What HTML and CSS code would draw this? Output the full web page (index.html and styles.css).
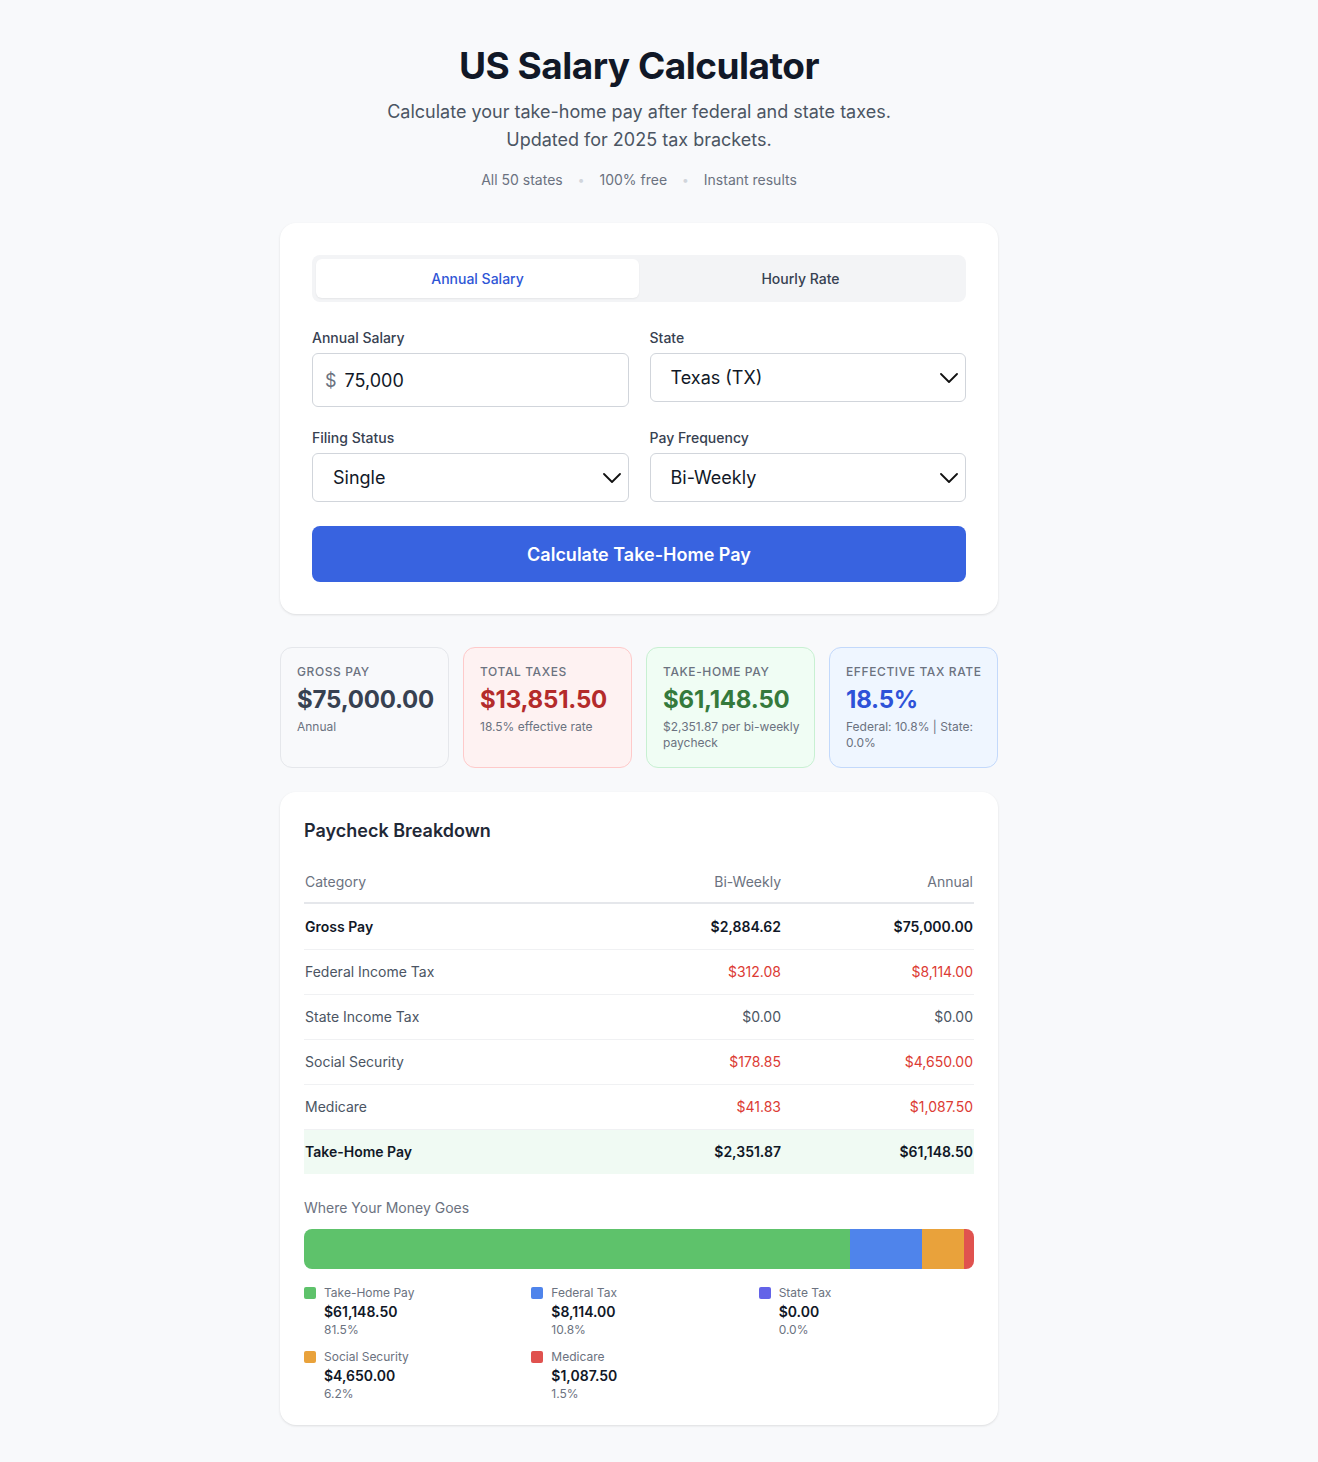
FILE: index.html
```html
<!DOCTYPE html>
<html lang="en">
<head>
<meta charset="utf-8">
<title>US Salary Calculator</title>
<link rel="stylesheet" href="styles.css">
</head>
<body>
<main class="page">
  <header class="hero">
    <h1 class="title">US Salary Calculator</h1>
    <p class="subtitle">Calculate your take-home pay after federal and state taxes.<br>Updated for 2025 tax brackets.</p>
    <div class="meta">
      <span>All 50 states</span><span class="dot">•</span><span>100% free</span><span class="dot">•</span><span>Instant results</span>
    </div>
  </header>

  <section class="card form-card">
    <div class="tabs">
      <div class="tab active">Annual Salary</div>
      <div class="tab">Hourly Rate</div>
    </div>
    <div class="fields">
      <div class="field">
        <label class="label">Annual Salary</label>
        <div class="input money"><span class="cur">$</span><span class="val">75,000</span></div>
      </div>
      <div class="field">
        <label class="label">State</label>
        <div class="input select"><span class="val">Texas (TX)</span>
          <svg class="chev" viewBox="0 0 18 10" width="18" height="10"><path d="M1 1l8 8 8-8" fill="none" stroke="#111" stroke-width="1.8" stroke-linecap="round" stroke-linejoin="round"/></svg></div>
      </div>
      <div class="field">
        <label class="label">Filing Status</label>
        <div class="input select"><span class="val">Single</span>
          <svg class="chev" viewBox="0 0 18 10" width="18" height="10"><path d="M1 1l8 8 8-8" fill="none" stroke="#111" stroke-width="1.8" stroke-linecap="round" stroke-linejoin="round"/></svg></div>
      </div>
      <div class="field">
        <label class="label">Pay Frequency</label>
        <div class="input select"><span class="val">Bi-Weekly</span>
          <svg class="chev" viewBox="0 0 18 10" width="18" height="10"><path d="M1 1l8 8 8-8" fill="none" stroke="#111" stroke-width="1.8" stroke-linecap="round" stroke-linejoin="round"/></svg></div>
      </div>
    </div>
    <button class="btn">Calculate Take-Home Pay</button>
  </section>

  <section class="stats">
    <div class="stat gross">
      <div class="stat-label">Gross Pay</div>
      <div class="stat-value">$75,000.00</div>
      <div class="stat-sub">Annual</div>
    </div>
    <div class="stat taxes">
      <div class="stat-label">Total Taxes</div>
      <div class="stat-value">$13,851.50</div>
      <div class="stat-sub">18.5% effective rate</div>
    </div>
    <div class="stat home">
      <div class="stat-label">Take-Home Pay</div>
      <div class="stat-value">$61,148.50</div>
      <div class="stat-sub">$2,351.87 per bi-weekly paycheck</div>
    </div>
    <div class="stat rate">
      <div class="stat-label">Effective Tax Rate</div>
      <div class="stat-value">18.5%</div>
      <div class="stat-sub">Federal: 10.8% | State: 0.0%</div>
    </div>
  </section>

  <section class="card breakdown">
    <h2 class="section-title">Paycheck Breakdown</h2>
    <table class="table">
      <thead>
        <tr><th class="c-cat">Category</th><th class="num">Bi-Weekly</th><th class="num">Annual</th></tr>
      </thead>
      <tbody>
        <tr class="strong"><td>Gross Pay</td><td class="num">$2,884.62</td><td class="num">$75,000.00</td></tr>
        <tr><td>Federal Income Tax</td><td class="num neg">$312.08</td><td class="num neg">$8,114.00</td></tr>
        <tr><td>State Income Tax</td><td class="num">$0.00</td><td class="num">$0.00</td></tr>
        <tr><td>Social Security</td><td class="num neg">$178.85</td><td class="num neg">$4,650.00</td></tr>
        <tr><td>Medicare</td><td class="num neg">$41.83</td><td class="num neg">$1,087.50</td></tr>
        <tr class="strong total"><td>Take-Home Pay</td><td class="num">$2,351.87</td><td class="num">$61,148.50</td></tr>
      </tbody>
    </table>

    <div class="where">Where Your Money Goes</div>
    <div class="bar">
      <div class="seg s-home" style="width:81.5%"></div>
      <div class="seg s-fed" style="width:10.8%"></div>
      <div class="seg s-ss" style="width:6.2%"></div>
      <div class="seg s-med" style="width:1.5%"></div>
    </div>

    <div class="legend">
      <div class="item"><span class="sw s-home"></span><div><div class="l-name">Take-Home Pay</div><div class="l-val">$61,148.50</div><div class="l-pct">81.5%</div></div></div>
      <div class="item"><span class="sw s-fed"></span><div><div class="l-name">Federal Tax</div><div class="l-val">$8,114.00</div><div class="l-pct">10.8%</div></div></div>
      <div class="item"><span class="sw s-state"></span><div><div class="l-name">State Tax</div><div class="l-val">$0.00</div><div class="l-pct">0.0%</div></div></div>
      <div class="item"><span class="sw s-ss"></span><div><div class="l-name">Social Security</div><div class="l-val">$4,650.00</div><div class="l-pct">6.2%</div></div></div>
      <div class="item"><span class="sw s-med"></span><div><div class="l-name">Medicare</div><div class="l-val">$1,087.50</div><div class="l-pct">1.5%</div></div></div>
    </div>
  </section>
</main>
</body>
</html>
```

FILE: styles.css
```css
* { box-sizing: border-box; }

html, body {
  margin: 0;
  background: #f8f9fb;
}

body {
  font-family: Inter, "Noto Sans", "Liberation Sans", sans-serif;
  color: #111827;
  padding: 0 40px 36px 0;
}

.page {
  width: 718px;
  margin: 0 auto;
}

.hero {
  text-align: center;
  padding-top: 44px;
}

.title {
  margin: 0;
  font-size: 37px;
  line-height: 44px;
  font-weight: 700;
  letter-spacing: -0.5px;
  color: #111827;
}

.subtitle {
  margin: 10px 0 0;
  font-size: 18px;
  line-height: 28px;
  color: #4b5563;
}

.meta {
  margin-top: 16px;
  font-size: 14px;
  line-height: 20px;
  color: #6b7280;
  display: flex;
  justify-content: center;
  gap: 15px;
}

.meta .dot {
  color: #d1d5db;
  font-size: 12px;
}

.card {
  background: #fff;
  border-radius: 16px;
  box-shadow: 0 1px 3px rgba(0,0,0,0.08), 0 1px 2px rgba(0,0,0,0.04);
}

.form-card {
  margin-top: 33px;
  padding: 32px;
}

.tabs {
  display: grid;
  grid-template-columns: 1fr 1fr;
  background: #f3f4f6;
  border-radius: 8px;
  padding: 4px;
}

.tab {
  text-align: center;
  font-size: 14px;
  line-height: 39px;
  font-weight: 500;
  color: #374151;
  border-radius: 6px;
}

.tab.active {
  background: #fff;
  color: #2f56d6;
  box-shadow: 0 1px 2px rgba(0,0,0,0.06);
}

.fields {
  display: grid;
  grid-template-columns: 1fr 1fr;
  column-gap: 21px;
  row-gap: 21px;
  margin-top: 26px;
  align-items: start;
}

.label {
  display: block;
  font-size: 14px;
  line-height: 20px;
  font-weight: 500;
  color: #374151;
  margin-bottom: 5px;
}

.input {
  border: 1px solid #d1d5db;
  border-radius: 6px;
  background: #fff;
  display: flex;
  align-items: center;
  font-size: 18px;
  color: #111827;
}

.money {
  height: 54px;
  padding: 0 12px;
  gap: 8px;
}

.money .cur {
  color: #6b7280;
}

.select {
  height: 49px;
  padding: 0 7px 0 20px;
  justify-content: space-between;
}

.btn {
  display: block;
  width: 100%;
  margin-top: 24px;
  height: 56px;
  border: 0;
  border-radius: 8px;
  background: #3863e0;
  color: #fff;
  font-family: inherit;
  font-size: 18px;
  font-weight: 600;
}

.stats {
  display: grid;
  grid-template-columns: repeat(4, minmax(0, 1fr));
  gap: 14px;
  margin-top: 33px;
}

.stat {
  border: 1px solid #e5e7eb;
  border-radius: 12px;
  padding: 16px 12px 16px 16px;
  min-height: 120px;
}

.stat-label {
  font-size: 12px;
  line-height: 16px;
  letter-spacing: 0.05em;
  text-transform: uppercase;
  color: #6b7280;
  font-weight: 500;
  white-space: nowrap;
}

.stat-value {
  font-size: 24px;
  line-height: 30px;
  font-weight: 700;
  margin-top: 5px;
  letter-spacing: -0.2px;
}

.stat-sub {
  font-size: 12px;
  line-height: 16px;
  color: #6b7280;
  margin-top: 4px;
}

.gross { background: #f8f9fb; border-color: #e5e7eb; }
.gross .stat-value { color: #374151; }
.taxes { background: #fef2f2; border-color: #fecaca; }
.taxes .stat-value { color: #b42b2b; }
.home { background: #f0fdf4; border-color: #c8f0d2; }
.home .stat-value { color: #357a3c; }
.rate { background: #eff6ff; border-color: #c3d9fb; }
.rate .stat-value { color: #2e52d8; }

.breakdown {
  margin-top: 24px;
  padding: 25px 24px 23px;
}

.section-title {
  margin: 0;
  font-size: 18px;
  line-height: 28px;
  font-weight: 600;
  color: #1f2937;
}

.table {
  width: 100%;
  border-collapse: collapse;
  margin-top: 14px;
  font-size: 14px;
}

.table th {
  font-weight: 400;
  color: #6b7280;
  text-align: left;
  padding: 0 1px 12px;
  height: 44px;
  vertical-align: bottom;
  border-bottom: 2px solid #e5e7eb;
}

.table td {
  padding: 0 1px;
  height: 45px;
  color: #4b5563;
  border-bottom: 1px solid #f0f1f3;
}

.table tbody tr:first-child td {
  height: 46px;
  padding-top: 1px;
}

.table .num {
  text-align: right;
}

.table th.num:nth-child(2) { width: 160px; }
.table th.num:nth-child(3) { width: 192px; }

.table td.neg { color: #dc3b34; }

.table tr.strong td {
  font-weight: 600;
  color: #111827;
}

.table tr.total td {
  background: #f0faf3;
  border-bottom: 0;
}

.where {
  margin-top: 24px;
  font-size: 14px;
  line-height: 20px;
  color: #6b7280;
}

.bar {
  margin-top: 11px;
  height: 40px;
  border-radius: 8px;
  overflow: hidden;
  display: flex;
}

.seg { height: 100%; }

.s-home { background: #5ec26b; }
.s-fed { background: #4f84eb; }
.s-state { background: #6363e8; }
.s-ss { background: #e9a23b; }
.s-med { background: #e0524f; }

.legend {
  margin-top: 16px;
  display: grid;
  grid-template-columns: repeat(3, 1fr);
  column-gap: 12px;
  row-gap: 11px;
}

.item {
  display: flex;
  gap: 8px;
  align-items: flex-start;
}

.sw {
  width: 12px;
  height: 12px;
  border-radius: 2px;
  flex: none;
  margin-top: 2px;
}

.l-name {
  font-size: 12px;
  line-height: 16px;
  color: #6b7280;
}

.l-val {
  font-size: 14px;
  line-height: 20px;
  font-weight: 600;
  color: #111827;
  margin-top: 1px;
}

.l-pct {
  font-size: 12px;
  line-height: 16px;
  color: #6b7280;
}
```
